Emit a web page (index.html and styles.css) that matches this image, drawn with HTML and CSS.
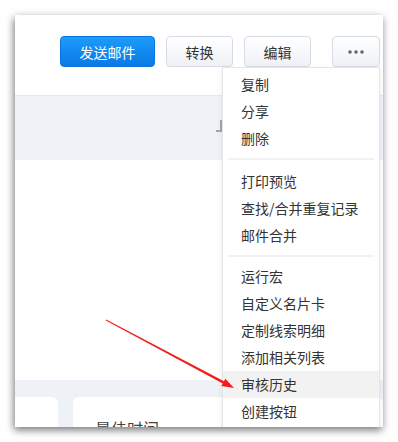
FILE: index.html
```html
<html>
    <head>
        <meta charset="utf-8">
        <link rel="stylesheet" href="styles.css">
    </head>
    <body>
        <div class="shot">
            <div class="toolbar">
                <button class="btn btn_primary">发送邮件</button>
                <button class="btn">转换</button>
                <button class="btn">编辑</button>
                <button class="btn btn_more" title="更多">
                    <svg width="16" height="4" viewBox="0 0 16 4">
                        <circle cx="2" cy="2" r="1.8" fill="#666" />
                        <circle cx="8" cy="2" r="1.8" fill="#666" />
                        <circle cx="14" cy="2" r="1.8" fill="#666" />
                    </svg>
                </button>
            </div>
            <div class="band">
                <span class="corner"></span>
            </div>
            <div class="blank"></div>
            <div class="cards">
                <div class="card card_left"></div>
                <div class="card card_main">最佳时间</div>
            </div>

            <div class="menu">
                <div class="group">
                    <div class="item">复制</div>
                    <div class="item">分享</div>
                    <div class="item">删除</div>
                </div>
                <div class="sep"></div>
                <div class="group">
                    <div class="item">打印预览</div>
                    <div class="item">查找/合并重复记录</div>
                    <div class="item">邮件合并</div>
                </div>
                <div class="sep sep_last"></div>
                <div class="group">
                    <div class="item">运行宏</div>
                    <div class="item">自定义名片卡</div>
                    <div class="item">定制线索明细</div>
                    <div class="item">添加相关列表</div>
                    <div class="item hover">审核历史</div>
                    <div class="item">创建按钮</div>
                </div>
            </div>
        </div>

        <!-- annotation arrow drawn over the screenshot -->
        <svg class="arrow" width="398" height="442" viewBox="0 0 398 442">
            <polygon fill="#f41b1b" points="106.2,319.6 224,381.3 225.3,378.7 234,388 221.4,386.1 222.8,383.6 105.8,320.4" />
        </svg>
    </body>
</html>
```

FILE: styles.css
```css
body
{
    margin:0;
    background:#fff;
    font-family:"Noto Sans CJK SC","Noto Sans",sans-serif;
    color:#333;
}
.shot
{
    position:relative;
    margin:15px 0 0 15px;
    width:368px;
    height:412px;
    overflow:hidden;
    background:#fff;
    box-shadow:-1px 3px 8px rgba(0,0,0,0.55);
}
.toolbar
{
    display:flex;
    justify-content:flex-end;
    align-items:flex-start;
    gap:11px;
    height:80px;
    box-sizing:border-box;
    padding:21px 3px 0 0;
}
.btn
{
    height:31px;
    width:67px;
    padding:0;
    font-family:inherit;
    font-size:14px;
    color:#333;
    border:1px solid #d6dbe4;
    border-radius:4px;
    background:linear-gradient(#ffffff,#eef1f6);
}
.btn_primary
{
    width:95px;
    color:#fff;
    border-color:#0b74dd;
    background:linear-gradient(#1c9cfb,#0a78e6);
}
.btn_more
{
    display:flex;
    align-items:center;
    justify-content:center;
    width:48px;
    margin-left:10px;
}
.band
{
    height:65px;
    box-sizing:border-box;
    padding:24px 0 0 201px;
    background:#eff2f6;
    border-top:1px solid #e5e9ef;
}
.corner
{
    display:block;
    width:4px;
    height:10px;
    border-right:2px solid #9ea6b8;
    border-bottom:2px solid #9ea6b8;
}
.blank
{
    height:220px;
}
.cards
{
    display:flex;
    gap:15px;
    height:47px;
    padding-top:17px;
    box-sizing:border-box;
    background:#eef2f6;
}
.card
{
    background:#fff;
    border-radius:6px 6px 0 0;
}
.card_left
{
    width:43px;
    border-top-left-radius:0;
}
.card_main
{
    flex:1;
    padding:19px 0 0 22px;
    font-size:16px;
    color:#444;
}
.menu
{
    position:absolute;
    left:207px;
    top:52px;
    width:156px;
    height:400px;
    padding-top:3px;
    background:#fff;
    border:1px solid #e3e5e8;
    box-shadow:0 2px 6px rgba(0,0,0,0.08);
}
.item
{
    height:27px;
    line-height:27px;
    padding-left:18px;
    font-size:14px;
    color:#333;
}
.item.hover
{
    background:#f2f2f2;
}
.sep
{
    height:2px;
    margin:6px 5px 8px;
    background:#f1f1f1;
}
.sep_last
{
    margin:6px 5px 6px;
}
.arrow
{
    position:absolute;
    left:0;
    top:0;
    pointer-events:none;
}
```
